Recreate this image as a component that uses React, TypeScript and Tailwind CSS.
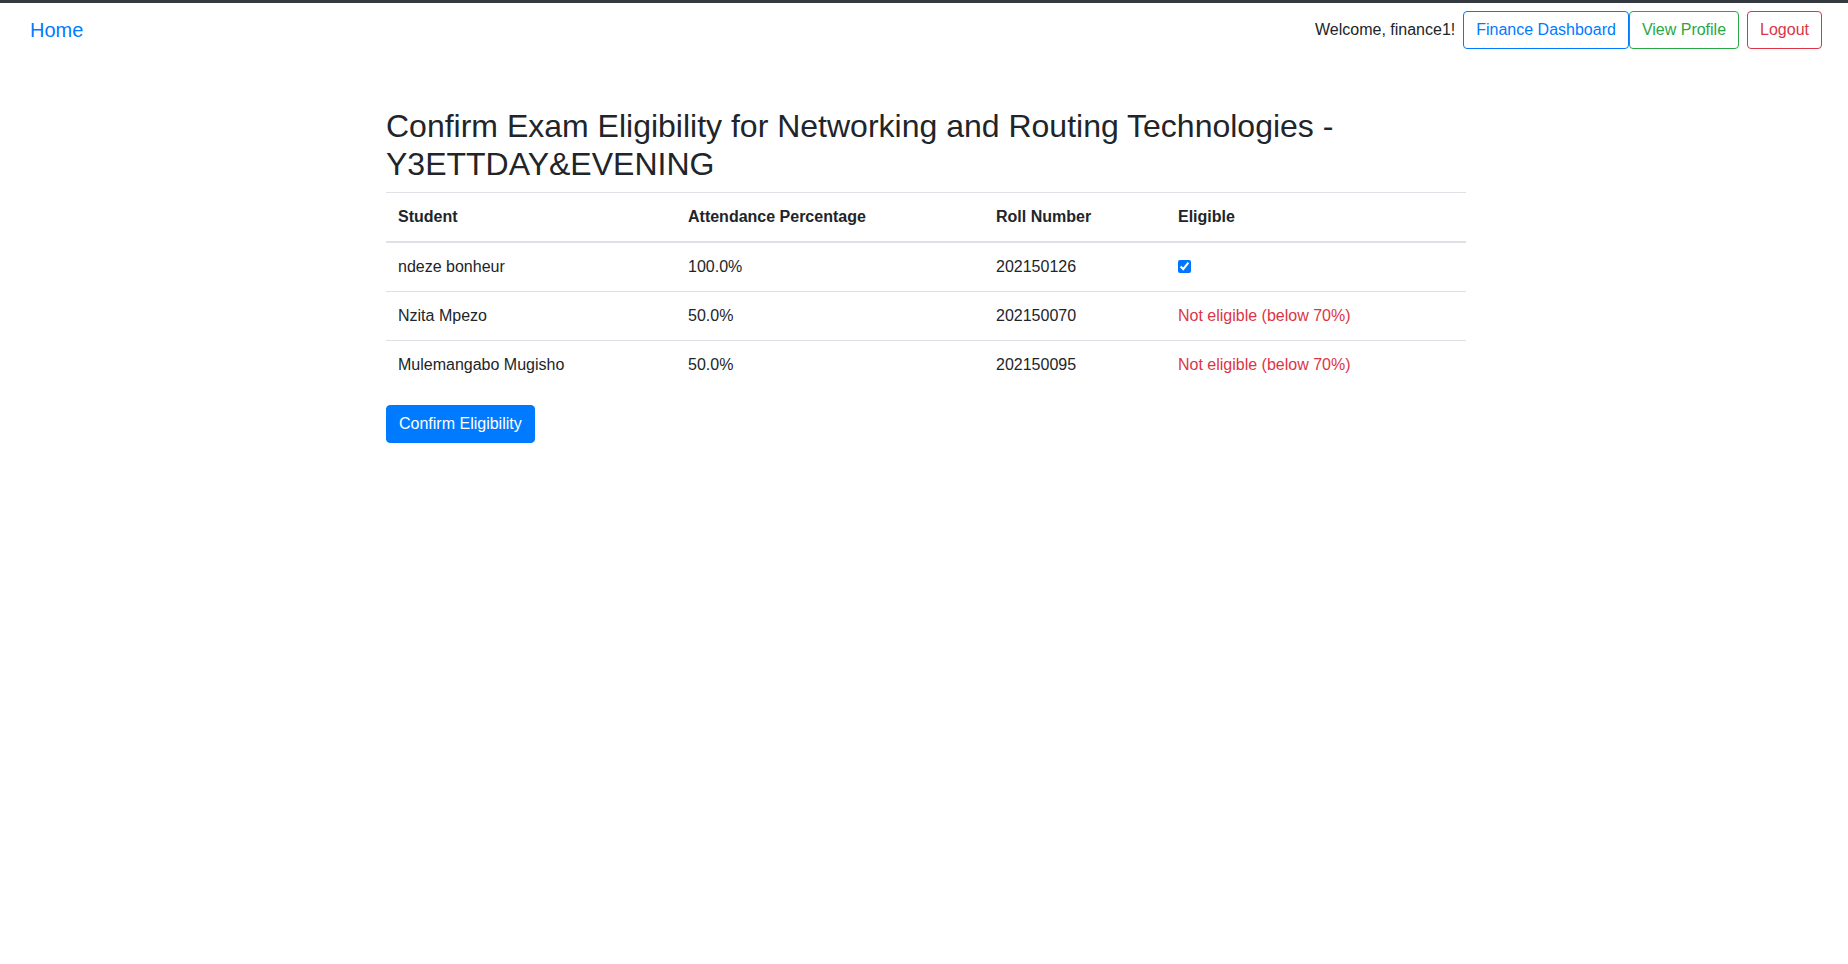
const students = [
  { name: "ndeze bonheur", attendance: "100.0%", roll: "202150126", eligible: true },
  { name: "Nzita Mpezo", attendance: "50.0%", roll: "202150070", eligible: false },
  { name: "Mulemangabo Mugisho", attendance: "50.0%", roll: "202150095", eligible: false },
];

const Navbar = () => {
  return (
    <nav className="flex items-center justify-between border-t-[3px] border-[#343a40] pl-[30px] pr-[26px] pt-[7px] pb-2">
      <a href="#" className="text-[20px] leading-[30px] py-[5px] text-[#007bff]">
        Home
      </a>
      <div className="flex items-center">
        <span className="mr-2 text-[#212529]">Welcome, finance1!</span>
        <a
          href="#"
          className="px-3 py-[6px] border border-[#007bff] text-[#007bff] rounded"
        >
          Finance Dashboard
        </a>
        <a
          href="#"
          className="px-3 py-[6px] border border-[#28a745] text-[#28a745] rounded"
        >
          View Profile
        </a>
        <a
          href="#"
          className="ml-2 px-3 py-[6px] border border-[#dc3545] text-[#dc3545] rounded"
        >
          Logout
        </a>
      </div>
    </nav>
  );
};

export default function App() {
  return (
    <div className="min-h-screen bg-white text-[16px] leading-6 text-[#212529] font-['Liberation_Sans',Arial,sans-serif]">
      <Navbar />
      <div className="w-[1084px] mx-auto pl-1 mt-[49px]">
        <h2 className="text-[32px] leading-[38.4px] mb-2 font-normal">
          Confirm Exam Eligibility for Networking and Routing Technologies -
          Y3ETTDAY&amp;EVENING
        </h2>
        <form onSubmit={(e) => e.preventDefault()}>
          <table className="w-[1080px] border-collapse mb-4">
            <thead>
              <tr className="border-t border-[#dee2e6] border-b-2">
                <th className="w-[290px] p-3 text-left font-bold">Student</th>
                <th className="w-[308px] p-3 text-left font-bold">Attendance Percentage</th>
                <th className="w-[182px] p-3 text-left font-bold">Roll Number</th>
                <th className="p-3 text-left font-bold">Eligible</th>
              </tr>
            </thead>
            <tbody>
              {students.map((s, i) => (
                <tr key={i} className={i > 0 ? "border-t border-[#dee2e6]" : ""}>
                  <td className="p-3">{s.name}</td>
                  <td className="p-3">{s.attendance}</td>
                  <td className="p-3">{s.roll}</td>
                  <td className="p-3">
                    {s.eligible ? (
                      <input
                        type="checkbox"
                        defaultChecked
                        className="w-[13px] h-[13px] align-[-1px] accent-[#0075ff]"
                      />
                    ) : (
                      <span className="text-[#dc3545]">Not eligible (below 70%)</span>
                    )}
                  </td>
                </tr>
              ))}
            </tbody>
          </table>
          <button
            type="submit"
            className="px-3 py-[6px] border border-[#007bff] bg-[#007bff] text-white rounded"
          >
            Confirm Eligibility
          </button>
        </form>
      </div>
    </div>
  );
}
